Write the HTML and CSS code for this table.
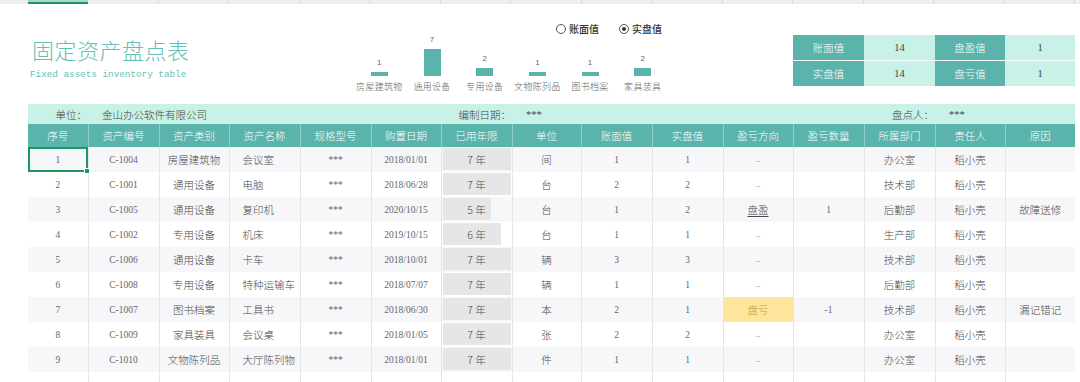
FILE: index.html
```html
<!DOCTYPE html>
<html lang="zh-CN">
<head>
    <meta charset="UTF-8">
    <title>固定资产盘点表</title>
    <link rel="stylesheet" href="styles.css">
</head>
<body>
    <!-- Sheet column strip -->
    <div class="col-strip">
        <span class="strip-cell active"></span>
        <span class="strip-cell"></span><span class="strip-cell"></span><span class="strip-cell"></span>
        <span class="strip-cell"></span><span class="strip-cell"></span><span class="strip-cell"></span>
        <span class="strip-cell"></span><span class="strip-cell"></span><span class="strip-cell"></span>
        <span class="strip-cell"></span><span class="strip-cell"></span><span class="strip-cell"></span>
        <span class="strip-cell"></span><span class="strip-cell"></span>
    </div>

    <header class="top">
        <div class="title-block">
            <h1 class="title">固定资产盘点表</h1>
            <div class="subtitle">Fixed assets inventory table</div>
        </div>

        <div class="chart-area">
            <div class="radio-row">
                <span class="radio"><i class="dot"></i>账面值</span>
                <span class="radio checked"><i class="dot"></i>实盘值</span>
            </div>
            <div class="chart">
                <div class="chart-col"><span class="val">1</span><span class="bar" style="height:4px"></span><span class="cat">房屋建筑物</span></div>
                <div class="chart-col"><span class="val">7</span><span class="bar" style="height:28px"></span><span class="cat">通用设备</span></div>
                <div class="chart-col"><span class="val">2</span><span class="bar" style="height:8px"></span><span class="cat">专用设备</span></div>
                <div class="chart-col"><span class="val">1</span><span class="bar" style="height:4px"></span><span class="cat">文物陈列品</span></div>
                <div class="chart-col"><span class="val">1</span><span class="bar" style="height:4px"></span><span class="cat">图书档案</span></div>
                <div class="chart-col"><span class="val">2</span><span class="bar" style="height:8px"></span><span class="cat">家具装具</span></div>
            </div>
        </div>

        <div class="summary">
            <span class="key">账面值</span><span class="num">14</span>
            <span class="key">盘盈值</span><span class="num">1</span>
            <span class="key">实盘值</span><span class="num">14</span>
            <span class="key">盘亏值</span><span class="num">1</span>
        </div>
    </header>

    <table class="sheet">
        <colgroup>
            <col style="width:60px"><col style="width:71px"><col style="width:70px"><col style="width:71px">
            <col style="width:71px"><col style="width:70px"><col style="width:71px"><col style="width:69px">
            <col style="width:71px"><col style="width:71px"><col style="width:70px"><col style="width:71px">
            <col style="width:71px"><col style="width:70px"><col style="width:70px">
        </colgroup>
        <thead>
            <tr class="info">
                <td class="lbl">单位：</td>
                <td colspan="5" class="txt">金山办公软件有限公司</td>
                <td class="lbl">编制日期：</td>
                <td colspan="5" class="txt">***</td>
                <td class="lbl">盘点人：</td>
                <td colspan="2" class="txt">***</td>
            </tr>
            <tr class="head">
                <th>序号</th><th>资产编号</th><th>资产类别</th><th>资产名称</th><th>规格型号</th>
                <th>购置日期</th><th>已用年限</th><th>单位</th><th>账面值</th><th>实盘值</th>
                <th>盈亏方向</th><th>盈亏数量</th><th>所属部门</th><th>责任人</th><th>原因</th>
            </tr>
        </thead>
        <tbody class="rows">
            <tr>
                <td class="selected">1<span class="handle"></span></td><td>C-1004</td><td>房屋建筑物</td><td class="name">会议室</td><td>***</td>
                <td>2018/01/01</td><td class="age" style="--w:68px">7 年</td><td>间</td><td>1</td><td>1</td>
                <td class="dash">–</td><td></td><td>办公室</td><td>稻小壳</td><td></td>
            </tr>
            <tr>
                <td>2</td><td>C-1001</td><td>通用设备</td><td class="name">电脑</td><td>***</td>
                <td>2018/06/28</td><td class="age" style="--w:68px">7 年</td><td>台</td><td>2</td><td>2</td>
                <td class="dash">–</td><td></td><td>技术部</td><td>稻小壳</td><td></td>
            </tr>
            <tr>
                <td>3</td><td>C-1005</td><td>通用设备</td><td class="name">复印机</td><td>***</td>
                <td>2020/10/15</td><td class="age" style="--w:48px">5 年</td><td>台</td><td>1</td><td>2</td>
                <td class="gain">盘盈</td><td>1</td><td>后勤部</td><td>稻小壳</td><td>故障送修</td>
            </tr>
            <tr>
                <td>4</td><td>C-1002</td><td>专用设备</td><td class="name">机床</td><td>***</td>
                <td>2019/10/15</td><td class="age" style="--w:58px">6 年</td><td>台</td><td>1</td><td>1</td>
                <td class="dash">–</td><td></td><td>生产部</td><td>稻小壳</td><td></td>
            </tr>
            <tr>
                <td>5</td><td>C-1006</td><td>通用设备</td><td class="name">卡车</td><td>***</td>
                <td>2018/10/01</td><td class="age" style="--w:68px">7 年</td><td>辆</td><td>3</td><td>3</td>
                <td class="dash">–</td><td></td><td>技术部</td><td>稻小壳</td><td></td>
            </tr>
            <tr>
                <td>6</td><td>C-1008</td><td>专用设备</td><td class="name">特种运输车</td><td>***</td>
                <td>2018/07/07</td><td class="age" style="--w:68px">7 年</td><td>辆</td><td>1</td><td>1</td>
                <td class="dash">–</td><td></td><td>后勤部</td><td>稻小壳</td><td></td>
            </tr>
            <tr>
                <td>7</td><td>C-1007</td><td>图书档案</td><td class="name">工具书</td><td>***</td>
                <td>2018/06/30</td><td class="age" style="--w:68px">7 年</td><td>本</td><td>2</td><td>1</td>
                <td class="loss">盘亏</td><td>-1</td><td>技术部</td><td>稻小壳</td><td>漏记错记</td>
            </tr>
            <tr>
                <td>8</td><td>C-1009</td><td>家具装具</td><td class="name">会议桌</td><td>***</td>
                <td>2018/01/05</td><td class="age" style="--w:68px">7 年</td><td>张</td><td>2</td><td>2</td>
                <td class="dash">–</td><td></td><td>办公室</td><td>稻小壳</td><td></td>
            </tr>
            <tr>
                <td>9</td><td>C-1010</td><td>文物陈列品</td><td class="name">大厅陈列物</td><td>***</td>
                <td>2018/01/01</td><td class="age" style="--w:68px">7 年</td><td>件</td><td>1</td><td>1</td>
                <td class="dash">–</td><td></td><td>办公室</td><td>稻小壳</td><td></td>
            </tr>
            <tr>
                <td></td><td></td><td></td><td></td><td></td><td></td><td></td><td></td>
                <td></td><td></td><td></td><td></td><td></td><td></td><td></td>
            </tr>
        </tbody>
    </table>
</body>
</html>
```

FILE: styles.css
```css
:root {
    --teal: #5ab4ab;
    --teal-text: #63c0b6;
    --mint: #c8f1e7;
    --grid: #e6e6e8;
    --row-alt: #f7f7f9;
    --text: #555;
    --select: #1f9466;
}

body {
    margin: 0;
    background: #fff;
    font-family: "Noto Sans CJK SC", sans-serif;
    color: var(--text);
    overflow: hidden;
}

/* Spreadsheet column header strip */
.col-strip {
    display: flex;
    height: 4px;
    background: #eeeeee;
    padding-left: 28px;
}

.strip-cell {
    width: 70.5px;
    border-right: 1px solid #dcdcdc;
    box-sizing: border-box;
}

.strip-cell.active {
    width: 60px;
    background: #9fdcc2;
    border-bottom: 2px solid var(--select);
    border-right: none;
}

/* Top area */
.top {
    display: flex;
    height: 100px;
    padding: 0 5px 0 28px;
}

.title-block {
    width: 325px;
    padding-left: 2px;
    box-sizing: border-box;
}

.title {
    margin: 31px 0 0 2px;
    font-size: 22px;
    line-height: 28px;
    font-weight: 200;
    letter-spacing: 0.5px;
    color: var(--teal-text);
}

.subtitle {
    margin-top: 6px;
    font-family: "Liberation Mono", monospace;
    font-size: 9.3px;
    line-height: 12px;
    color: var(--teal-text);
}

.chart-area {
    width: 316px;
    display: flex;
    flex-direction: column;
}

.radio-row {
    display: flex;
    justify-content: flex-end;
    gap: 20px;
    margin-top: 19px;
    padding-right: 7px;
    height: 12px;
    font-size: 10px;
    line-height: 12px;
    font-weight: 500;
    color: #333;
}

.radio {
    display: flex;
    align-items: center;
    gap: 3px;
}

.dot {
    width: 8px;
    height: 8px;
    border: 1px solid #555;
    border-radius: 50%;
    box-sizing: content-box;
    position: relative;
}

.radio.checked .dot::after {
    content: "";
    position: absolute;
    left: 2px;
    top: 2px;
    width: 4px;
    height: 4px;
    border-radius: 50%;
    background: #333;
}

.chart {
    display: flex;
    height: 58px;
}

.chart-col {
    flex: 1;
    display: flex;
    flex-direction: column;
    justify-content: flex-end;
    align-items: center;
}

.val {
    font-family: "Liberation Sans", sans-serif;
    font-size: 8px;
    line-height: 10px;
    color: #666;
    margin-bottom: 4px;
}

.bar {
    width: 17px;
    background: var(--teal);
}

.cat {
    margin-top: 5px;
    font-size: 9px;
    line-height: 12px;
    letter-spacing: 0.3px;
    font-weight: 300;
    color: #666;
    white-space: nowrap;
}

.summary {
    margin: 31px 0 0 auto;
    width: 282px;
    height: 51px;
    display: grid;
    grid-template-columns: 71px 71px 70px 70px;
    grid-template-rows: 25px 25px;
    row-gap: 1px;
    font-size: 10.5px;
    font-weight: 300;
}

.summary span {
    display: flex;
    align-items: center;
    justify-content: center;
}

.summary .key {
    background: var(--teal);
    color: #fff;
}

.summary .num {
    background: var(--mint);
    color: #444;
    font-family: "Liberation Serif", serif;
    font-size: 10.5px;
}

/* Main sheet */
.sheet {
    margin-left: 28px;
    width: 1047px;
    table-layout: fixed;
    border-collapse: collapse;
    font-size: 10.5px;
    font-weight: 300;
}

.info td {
    height: 20px;
    padding: 0;
    background: var(--mint);
    color: #444;
    white-space: nowrap;
}

.info .lbl {
    text-align: right;
    padding-right: 1px;
}

.info .txt {
    padding-left: 14px;
    font-family: "Liberation Serif", "Noto Sans CJK SC", serif;
}

.head th {
    height: 23px;
    padding: 0;
    background: var(--teal);
    color: #fff;
    font-weight: 300;
    border-left: 1px solid #8fd0c8;
}

.head th:first-child {
    border-left: none;
}

.rows td {
    height: 25px;
    padding: 0;
    text-align: center;
    border-left: 1px solid var(--grid);
    white-space: nowrap;
    color: #4a4a4a;
}

.rows td:first-child {
    border-left: none;
}

.rows tr:nth-child(odd) td {
    background-color: var(--row-alt);
}

/* number-ish columns use the thin serif digits */
.rows td:nth-child(1),
.rows td:nth-child(2),
.rows td:nth-child(5),
.rows td:nth-child(6),
.rows td:nth-child(9),
.rows td:nth-child(10),
.rows td:nth-child(12) {
    font-family: "Liberation Serif", serif;
    font-size: 9.5px;
    font-weight: 400;
    color: #666;
}

.rows td.name {
    text-align: left;
    padding-left: 13px;
}

.rows td.age {
    background-image: linear-gradient(#e6e6e6, #e6e6e6);
    background-repeat: no-repeat;
    background-position: 1px 1px;
    background-size: var(--w) 22px;
}

.rows td.dash {
    color: #999;
}

.rows td.gain {
    text-decoration: underline;
    text-underline-offset: 2px;
}

.rows tr td.loss {
    background-color: #fde59c;
    color: #c49a32;
}

.rows td.selected {
    position: relative;
    outline: 2px solid var(--select);
    outline-offset: -2px;
}

.handle {
    position: absolute;
    right: -2px;
    bottom: -2px;
    width: 4px;
    height: 4px;
    background: var(--select);
    border: 1px solid #fff;
}
```
